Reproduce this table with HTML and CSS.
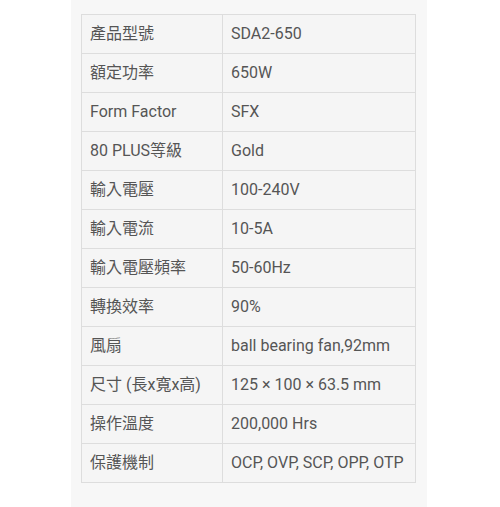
FILE: index.html
```html
<!DOCTYPE html>
<html lang="zh-Hant">
<head>
<meta charset="utf-8">
<link rel="stylesheet" href="styles.css">
</head>
<body>
<div class="panel">
<table class="spec">
<tbody>
<tr><td class="k">產品型號</td><td class="v">SDA2-650</td></tr>
<tr><td class="k">額定功率</td><td class="v">650W</td></tr>
<tr><td class="k">Form Factor</td><td class="v">SFX</td></tr>
<tr><td class="k">80 PLUS等級</td><td class="v">Gold</td></tr>
<tr><td class="k">輸入電壓</td><td class="v">100-240V</td></tr>
<tr><td class="k">輸入電流</td><td class="v">10-5A</td></tr>
<tr><td class="k">輸入電壓頻率</td><td class="v">50-60Hz</td></tr>
<tr><td class="k">轉換效率</td><td class="v">90%</td></tr>
<tr><td class="k">風扇</td><td class="v">ball bearing fan,92mm</td></tr>
<tr><td class="k">尺寸 (長x寬x高)</td><td class="v">125 × 100 × 63.5 mm</td></tr>
<tr><td class="k">操作溫度</td><td class="v">200,000 Hrs</td></tr>
<tr><td class="k">保護機制</td><td class="v">OCP, OVP, SCP, OPP, OTP</td></tr>
</tbody>
</table>
</div>
</body>
</html>
```
FILE: styles.css
```css
html, body {
  margin: 0;
  padding: 0;
  background: #ffffff;
}
body {
  font-family: Roboto, "Noto Sans CJK TC", sans-serif;
  color: #555555;
}
.panel {
  box-sizing: border-box;
  width: 356px;
  min-height: 507px;
  margin-left: 71px;
  padding: 14px 11px 20px 10px;
  background: #f7f7f7;
}
.spec {
  border-collapse: collapse;
  width: 335px;
  background: #f5f5f5;
}
.spec td {
  border: 1px solid #dddddd;
  height: 39px;
  padding: 0 8px;
  box-sizing: border-box;
  font-size: 16px;
  line-height: 20px;
  vertical-align: middle;
  white-space: nowrap;
}
.spec .k {
  width: 141px;
}
```
